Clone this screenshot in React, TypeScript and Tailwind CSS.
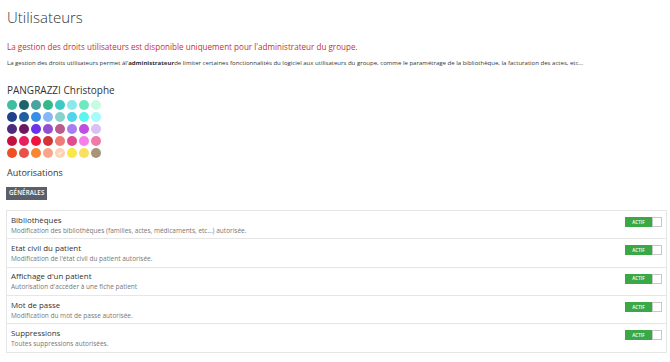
import React from "react";

const colors: string[][] = [
  ["#3dbea0", "#1f6468", "#4aa39e", "#36b88d", "#3ec9c4", "#8de8e9", "#6de9c0", "#c9fbe0"],
  ["#1f3f8f", "#1f5f9f", "#3a8de6", "#84b9f5", "#88d1cc", "#4fd6ea", "#5df5ef", "#a6fbfb"],
  ["#4b2a7f", "#6e1860", "#6a32ea", "#9250ce", "#b85b8d", "#a47ef2", "#bf4fe0", "#d9c0f5"],
  ["#c0123e", "#e91e5d", "#f0143c", "#d13537", "#f07a75", "#e04d8e", "#f57fe8", "#f27aa8"],
  ["#f04e23", "#e8524a", "#f98535", "#f9a58a", "#fdd3b8", "#f9e845", "#fae060", "#a89578"],
];

const rows = [
  { t: "Bibliothèques", s: "Modification des bibliothèques (familles, actes, médicaments, etc...) autorisée." },
  { t: "Etat civil du patient", s: "Modification de l'état civil du patient autorisée." },
  { t: "Affichage d'un patient", s: "Autorisation d'accéder à une fiche patient" },
  { t: "Mot de passe", s: "Modification du mot de passe autorisée." },
  { t: "Suppressions", s: "Toutes suppressions autorisées." },
];

export default function App() {
  return (
    <div
      className="w-[670px] h-[362px] bg-white overflow-hidden px-[6px] text-[#333]"
      style={{ fontFamily: '"Open Sans", "Liberation Sans", sans-serif' }}
    >
      <div className="h-[34px] leading-[34px] text-[15px] font-light text-[#333] pl-px">Utilisateurs</div>
      <div className="mt-[6px] h-[14px] leading-[14px] text-[8.1px] text-[#c9302c] pl-px">
        La gestion des droits utilisateurs est disponible uniquement pour l'administrateur du groupe.
      </div>
      <div className="mt-[4px] h-[10px] leading-[10px] text-[6.05px] text-[#333] pl-px whitespace-nowrap">
        La gestion des droits utilisateurs permet à<span>l'</span>
        <b className="font-bold">administrateur</b>de limiter certaines fonctionnalités du logiciel aux utilisateurs du groupe, comme le paramétrage de la bibliothèque, la facturation des actes, etc...
      </div>
      <div className="mt-[15px] h-[14px] leading-[14px] text-[10px] text-[#333] pl-px">PANGRAZZI Christophe</div>
      <div className="mt-[3px] ml-px flex flex-col gap-[2px]">
        {colors.map((row, i) => (
          <div key={i} className="flex gap-[2px]">
            {row.map((c, j) => (
              <div
                key={j}
                className="w-[10px] h-[10px] rounded-full flex items-center justify-center"
                style={{ backgroundColor: c }}
              >
                {i === 4 && j === 4 && (
                  <svg width="6" height="6" viewBox="0 0 10 10">
                    <path d="M2 5.2 L4.2 7.3 L8.2 2.8" fill="none" stroke="#fff" strokeWidth="1.6" />
                  </svg>
                )}
              </div>
            ))}
          </div>
        ))}
      </div>
      <div className="mt-[8px] h-[14px] leading-[14px] text-[9px] text-[#333] pl-px">Autorisations</div>
      <div className="mt-[7px] flex w-fit h-[13px] items-center px-[3px] bg-[#5b5f6c] text-white text-[6.2px] leading-none font-semibold tracking-[0.1px]">
        GÉNÉRALES
      </div>
      <div className="mt-[10px] w-[661px] border border-[#e6e6e6] border-b-0">
        {rows.map((r, i) => (
          <div
            key={i}
            className="h-[28.35px] border-b border-[#e6e6e6] flex items-center justify-between pl-[4px] pr-[4px]"
          >
            <div className="flex flex-col">
              <div className="text-[7.9px] leading-[11px] text-[#333]">{r.t}</div>
              <div className="text-[6.5px] leading-[9px] text-[#777]">{r.s}</div>
            </div>
            <div className="self-start mt-[6px] flex h-[10px] w-[37px] items-stretch">
              <div className="flex-1 bg-[#3aa845] text-white text-[4.6px] flex items-center justify-center font-semibold">
                ACTIF
              </div>
              <div className="w-[10px] bg-white border border-[#c8c8c8]" />
            </div>
          </div>
        ))}
      </div>
    </div>
  );
}
